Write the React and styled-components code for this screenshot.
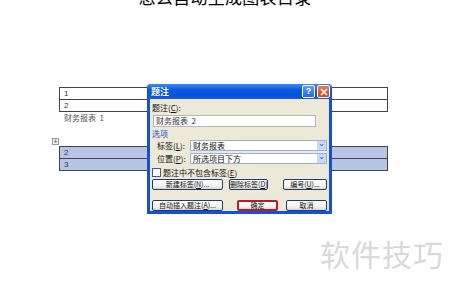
import React from 'react';
import styled, { createGlobalStyle } from 'styled-components';

const Global = createGlobalStyle`
html, body { margin:0; padding:0; background:#fff; }
body { font-family:"Noto Sans CJK SC","Liberation Sans",sans-serif; }
`;

const App = () => {
    return (
        <Page>
            <Global />
            <Title>怎么自动生成图表目录</Title>
            <Doc>
                <Table top="87px">
                    <Row><Cell>1</Cell></Row>
                    <Row><Cell>2</Cell></Row>
                </Table>
                <Caption>财务报表&nbsp;&nbsp;1</Caption>
                <Handle>+</Handle>
                <Table top="1px" selected>
                    <Row selected><Cell>2</Cell></Row>
                    <Row selected><Cell>3</Cell></Row>
                </Table>
            </Doc>

            <Dialog>
                <TitleBar>
                    <TitleText>题注</TitleText>
                    <TitleBtn>?</TitleBtn>
                    <TitleBtn close>
                        <svg width="8" height="8" viewBox="0 0 8 8">
                            <path d="M1 1 L7 7 M7 1 L1 7" stroke="#fff" strokeWidth="1.6" />
                        </svg>
                    </TitleBtn>
                </TitleBar>
                <Body>
                    <Label>题注(<u>C</u>):</Label>
                    <TextBox>财务报表&nbsp;&nbsp;2</TextBox>
                    <Group>选项</Group>
                    <FieldRow>
                        <FieldLabel>标签(<u>L</u>):</FieldLabel>
                        <Combo>财务报表<Arrow>⌄</Arrow></Combo>
                    </FieldRow>
                    <FieldRow>
                        <FieldLabel>位置(<u>P</u>):</FieldLabel>
                        <Combo>所选项目下方<Arrow>⌄</Arrow></Combo>
                    </FieldRow>
                    <CheckRow>
                        <Box />
                        <span>题注中不包含标签(<u>E</u>)</span>
                    </CheckRow>
                    <BtnRow>
                        <Btn w="71px">新建标签(<u>N</u>)...</Btn>
                        <Btn w="39px" ml="6px">删除标签(<u>D</u>)</Btn>
                        <Btn w="44px" ml="15px">编号(<u>U</u>)...</Btn>
                    </BtnRow>
                    <BtnRow mt="10px">
                        <Btn w="71px">自动插入题注(<u>A</u>)...</Btn>
                        <Btn w="41px" ml="14px" marked>确定</Btn>
                        <Btn w="41px" ml="8px">取消</Btn>
                    </BtnRow>
                </Body>
            </Dialog>

            <Watermark>软件技巧</Watermark>
        </Page>
    );
};
export default App;

const Page = styled.div`
position:relative;
width:450px;
height:288px;
overflow:hidden;
background:#fff;
`;

const Title = styled.div`
position:absolute;
top:-13px;
left:0;
width:450px;
text-align:center;
font-family:"Noto Sans CJK SC",serif;
font-size:17px;
line-height:20px;
color:#000;
letter-spacing:0.3px;
`;

const Doc = styled.div`
padding-left:59px;
width:329px;
`;

const Table = styled.div`
margin-top:${p => p.top};
border:1px solid #444;
width:327px;
display:flex;
flex-direction:column;
`;

const Row = styled.div`
height:11px;
background:${p => p.selected ? '#b6c5e8' : '#fff'};
& + & { border-top:1px solid #444; }
`;

const Cell = styled.div`
font-size:8px;
line-height:11px;
padding-left:4px;
color:#333;
font-family:"Liberation Sans",sans-serif;
`;

const Caption = styled.div`
margin:0 0 0 5px;
font-size:8px;
line-height:12px;
color:#555;
`;

const Handle = styled.div`
margin:14px 0 0 -7px;
width:5px;
height:5px;
border:1px solid #999;
background:#eee;
font-size:7px;
line-height:5px;
text-align:center;
color:#555;
font-family:"Liberation Sans",sans-serif;
`;

const Dialog = styled.div`
position:absolute;
left:147px;
top:84px;
width:185px;
height:130px;
box-sizing:border-box;
background:#ece9d8;
border:3px solid #1450d8;
border-top:0;
border-radius:4px 4px 0 0;
display:flex;
flex-direction:column;
`;

const TitleBar = styled.div`
height:15px;
margin:0 -3px;
padding:0 2px 0 4px;
border-radius:4px 4px 0 0;
background:linear-gradient(#3a8cf7,#0858e0 40%,#0a52d6 80%,#1b5ed8);
display:flex;
align-items:center;
gap:2px;
`;

const TitleText = styled.div`
flex:1;
color:#fff;
font-weight:bold;
font-size:9px;
line-height:15px;
`;

const TitleBtn = styled.div`
width:11px;
height:11px;
border:1px solid #fff;
border-radius:2px;
background:${p => p.close ? 'linear-gradient(#e97a5c,#d2451d)' : 'linear-gradient(#5f9bf8,#2767e0)'};
color:#fff;
font-weight:bold;
font-size:9px;
line-height:11px;
display:flex;
align-items:center;
justify-content:center;
font-family:"Liberation Sans",sans-serif;
`;

const Body = styled.div`
flex:1;
padding:3px 2px 0 2px;
display:flex;
flex-direction:column;
font-size:8px;
color:#111;
white-space:nowrap;
`;

const Label = styled.div`
line-height:11px;
height:11px;
`;

const TextBox = styled.div`
margin:2px 0 0 1px;
width:163px;
height:12px;
box-sizing:border-box;
background:#fff;
border:1px solid #b4b8b0;
line-height:10px;
padding-left:2px;
color:#333;
`;

const Group = styled.div`
margin-top:2px;
color:#1d4fc6;
line-height:9px;
height:9px;
`;

const FieldRow = styled.div`
display:flex;
align-items:center;
margin-top:2px;
height:11px;
`;

const FieldLabel = styled.div`
width:38px;
padding-left:5px;
box-sizing:border-box;
line-height:11px;
`;

const Combo = styled.div`
position:relative;
width:137px;
height:11px;
box-sizing:border-box;
border:1px solid #9db0d6;
background:#fff;
line-height:9px;
padding-left:2px;
`;

const Arrow = styled.span`
position:absolute;
right:0;
top:0;
width:9px;
height:9px;
background:#c7d6f5;
color:#3457a8;
font-size:8px;
line-height:5px;
text-align:center;
font-family:"DejaVu Sans",sans-serif;
`;

const CheckRow = styled.div`
display:flex;
align-items:center;
gap:2px;
margin-top:4px;
height:9px;
line-height:9px;
`;

const Box = styled.div`
width:7px;
height:7px;
border:1px solid #3d5a91;
background:#fff;
`;

const BtnRow = styled.div`
display:flex;
margin-top:${p => p.mt || '2px'};
`;

const Btn = styled.div`
width:${p => p.w};
margin-left:${p => p.ml || '0'};
height:11px;
box-sizing:border-box;
border:${p => p.marked ? '2px solid #b51d2a' : '1px solid #1f3b77'};
border-radius:2px;
background:linear-gradient(#fff,#f2f1ea 70%,#d8d5c6);
font-size:7px;
line-height:${p => p.marked ? '7px' : '9px'};
text-align:center;
overflow:hidden;
color:#111;
`;

const Watermark = styled.div`
position:absolute;
left:320px;
top:236px;
font-size:30px;
line-height:34px;
color:#d9d9d9;
letter-spacing:1px;
font-family:"Noto Sans CJK SC",sans-serif;
`;
